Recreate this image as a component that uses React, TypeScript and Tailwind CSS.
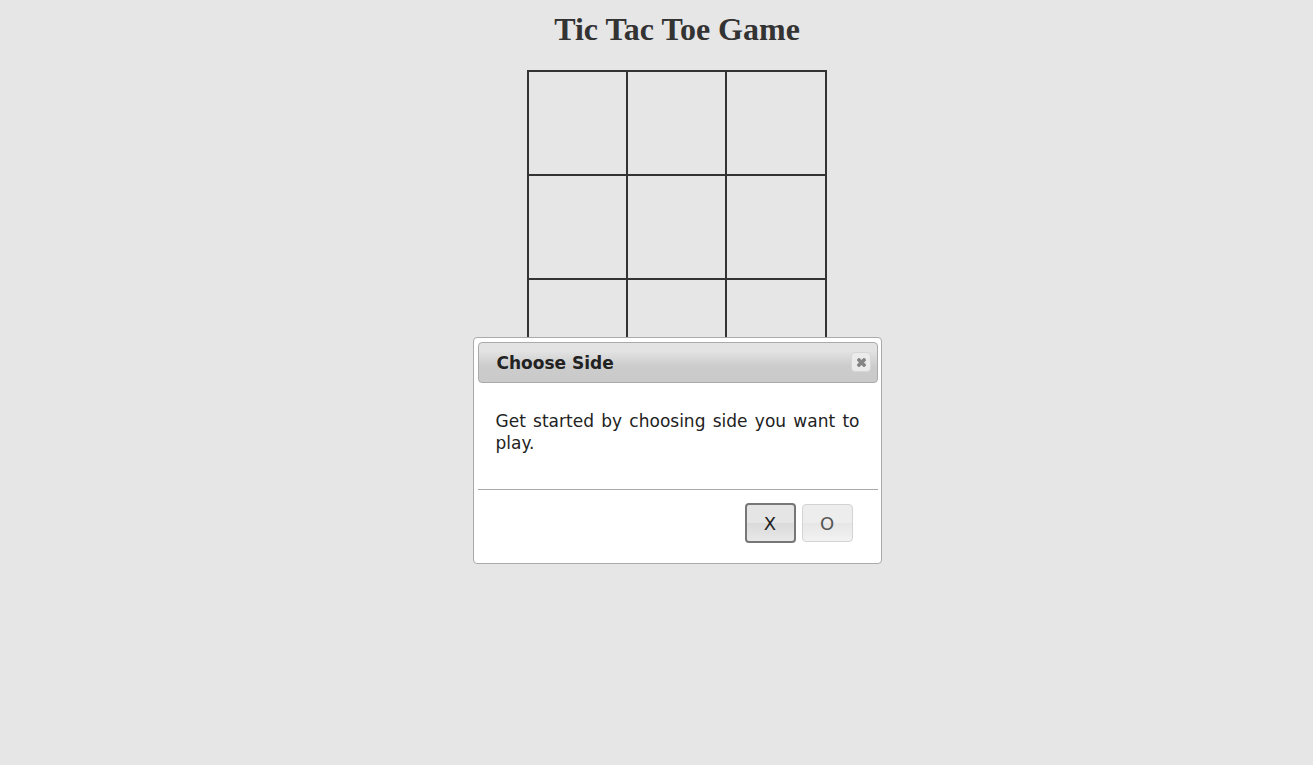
import { useState } from "react";

type Side = "X" | "O";

const cells = Array.from({ length: 9 }, (_, index) => index);

function CloseIcon() {
  return (
    <svg viewBox="0 0 16 16" className="size-4 shrink-0" aria-hidden="true">
      <path
        d="M4 5.500 5.500 4h1l2 2 2-2h1L13 5.500v1l-2 2 2 2v1L11.500 13h-1l-2-2-2 2h-1L4 11.500v-1l2-2-2-2z"
        fill="#858585"
      />
    </svg>
  );
}

function ChooseSideDialog({ onClose, onChoose }: { onClose: () => void; onChoose: (side: Side) => void }) {
  return (
    <div
      role="dialog"
      aria-labelledby="dialog-title"
      aria-describedby="dialog-text"
      className="absolute inset-x-0 top-[337px] mx-auto w-[409px] rounded border border-[#aaaaaa] bg-white py-1 pr-[3px] pl-1 font-['DejaVu_Sans',sans-serif] text-[17px] leading-[22px] text-[#222222]"
    >
      <div className="flex items-center justify-between rounded border border-[#aaaaaa] bg-linear-to-b from-[#e3e3e3] from-20% via-[#cccccc] via-60% to-[#cacaca] pt-2 pr-[6px] pb-[6px] pl-[18px]">
        <h2 id="dialog-title" className="font-bold leading-[25px]">
          Choose Side
        </h2>
        <button
          type="button"
          aria-label="Close"
          onClick={onClose}
          className="mb-[3px] flex size-5 items-center justify-center rounded border border-[#d6d6d6] bg-[#ebebeb]"
        >
          <CloseIcon />
        </button>
      </div>
      <p id="dialog-text" className="px-[18px] pt-[27px] pb-[35px] text-justify">
        Get started by choosing side you want to play.
      </p>
      <div className="flex justify-end gap-[6px] border-t border-[#aaaaaa] pt-[13px] pr-[25px] pb-4">
        <button
          type="button"
          onClick={() => onChoose("X")}
          className="h-10 w-[51px] rounded border-2 border-[#777777] bg-linear-to-b from-[#e5e5e5] from-50% via-[#dadada] via-50% to-[#e8e8e8] pt-0.5 text-[18px] text-[#212121]"
        >
          X
        </button>
        <button
          type="button"
          onClick={() => onChoose("O")}
          className="my-px h-[38px] w-[51px] rounded border border-[#d3d3d3] bg-linear-to-b from-[#ededed] from-50% via-[#e6e6e6] via-50% to-[#f2f2f2] pt-0.5 text-[18px] text-[#555555]"
        >
          O
        </button>
      </div>
    </div>
  );
}

export default function App() {
  const [open, setOpen] = useState(true);
  const [, setSide] = useState<Side | null>(null);

  return (
    <div className="min-h-screen bg-[#e6e6e6] pl-[41px] text-[#333333]">
      <main className="relative flex flex-col items-center pt-[11px]">
        <h1 className="font-['Liberation_Serif',serif] text-[32px] font-bold leading-[37px]">
          Tic Tac Toe Game
        </h1>
        <div className="mt-[22px] grid w-[300px] grid-cols-[99px_99px_1fr] border-t-2 border-l-2 border-[#333333]">
          {cells.map((cell) => (
            <button
              key={cell}
              type="button"
              aria-label={`Cell ${cell + 1}`}
              className="h-[104px] border-r-2 border-b-2 border-[#333333]"
            />
          ))}
        </div>
        {open && (
          <ChooseSideDialog
            onClose={() => setOpen(false)}
            onChoose={(side) => {
              setSide(side);
              setOpen(false);
            }}
          />
        )}
      </main>
    </div>
  );
}
